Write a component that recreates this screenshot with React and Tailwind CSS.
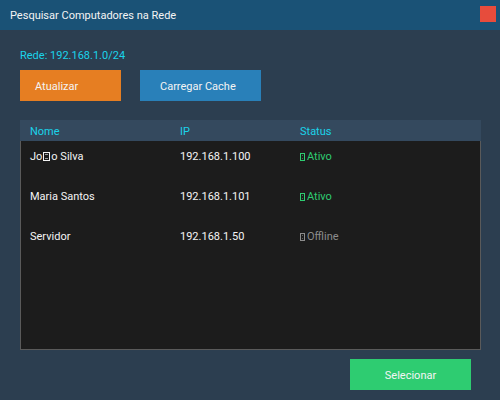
import React from "react";

const rows = [
  { name: "João Silva", ip: "192.168.1.100", status: "Ativo", online: true },
  { name: "Maria Santos", ip: "192.168.1.101", status: "Ativo", online: true },
  { name: "Servidor", ip: "192.168.1.50", status: "Offline", online: false },
];

// Small boxed glyph placeholder shown where the font has no character
function Box({ wide }) {
  return (
    <span
      className={`inline-block align-[-1px] border border-current relative ${
        wide ? "w-[7px] h-[9px] mx-[1px]" : "w-[5px] h-[8px] mr-[2px]"
      }`}
    >
      <span className="absolute inset-[1px] border-y border-current opacity-60" />
    </span>
  );
}

function NameCell({ name }) {
  if (name.includes("ã")) {
    const [a, b] = name.split("ã");
    return (
      <span>
        {a}
        <Box wide />
        {b}
      </span>
    );
  }
  return <span>{name}</span>;
}

export default function App() {
  return (
    <div
      className="w-[500px] h-[400px] bg-[#2c3e50] flex flex-col text-[11px] text-[#f4f4f4]"
      style={{ fontFamily: "Roboto, 'Liberation Sans', sans-serif" }}
    >
      <div className="h-[30px] bg-[#1a5276] flex items-center justify-between pl-[10px] pr-[4px]">
        <span className="leading-none">Pesquisar Computadores na Rede</span>
        <div className="w-[16px] h-[16px] bg-[#e74c3c] mb-[3px]" />
      </div>

      <div className="flex flex-col px-[20px]">
        <div className="mt-[19px] h-[14px] leading-[14px] text-[#1ad3ea]">Rede: 192.168.1.0/24</div>
        <div className="mt-[7px] flex gap-[19px]">
          <button className="w-[101px] h-[31px] bg-[#e67e22] text-left pl-[15px] pt-[4px]">Atualizar</button>
          <button className="w-[121px] h-[31px] bg-[#2980b9] text-left pl-[20px] pt-[4px]">Carregar Cache</button>
        </div>

        <div className="mt-[19px] w-[461px] flex flex-col">
          <div className="h-[21px] bg-[#34495e] flex items-center text-[#1ad3ea] pl-[10px] pt-[4px]">
            <span className="w-[150px]">Nome</span>
            <span className="w-[120px]">IP</span>
            <span>Status</span>
          </div>
          <div className="w-[461px] h-[209px] bg-[#1c1c1c] border-l border-r border-b border-[#5a5a5a] pl-[9px] pt-[8px] flex flex-col">
            {rows.map((r) => (
              <div key={r.ip} className="h-[40px] flex">
                <span className="w-[150px]">
                  <NameCell name={r.name} />
                </span>
                <span className="w-[120px]">{r.ip}</span>
                <span className={r.online ? "text-[#2ecc71]" : "text-[#8c8c8c]"}>
                  <Box />
                  {r.status}
                </span>
              </div>
            ))}
          </div>
        </div>

        <div className="mt-[9px] flex justify-end pr-[9px]">
          <button className="w-[121px] h-[31px] bg-[#2ecc71] pt-[4px]">Selecionar</button>
        </div>
      </div>
    </div>
  );
}
